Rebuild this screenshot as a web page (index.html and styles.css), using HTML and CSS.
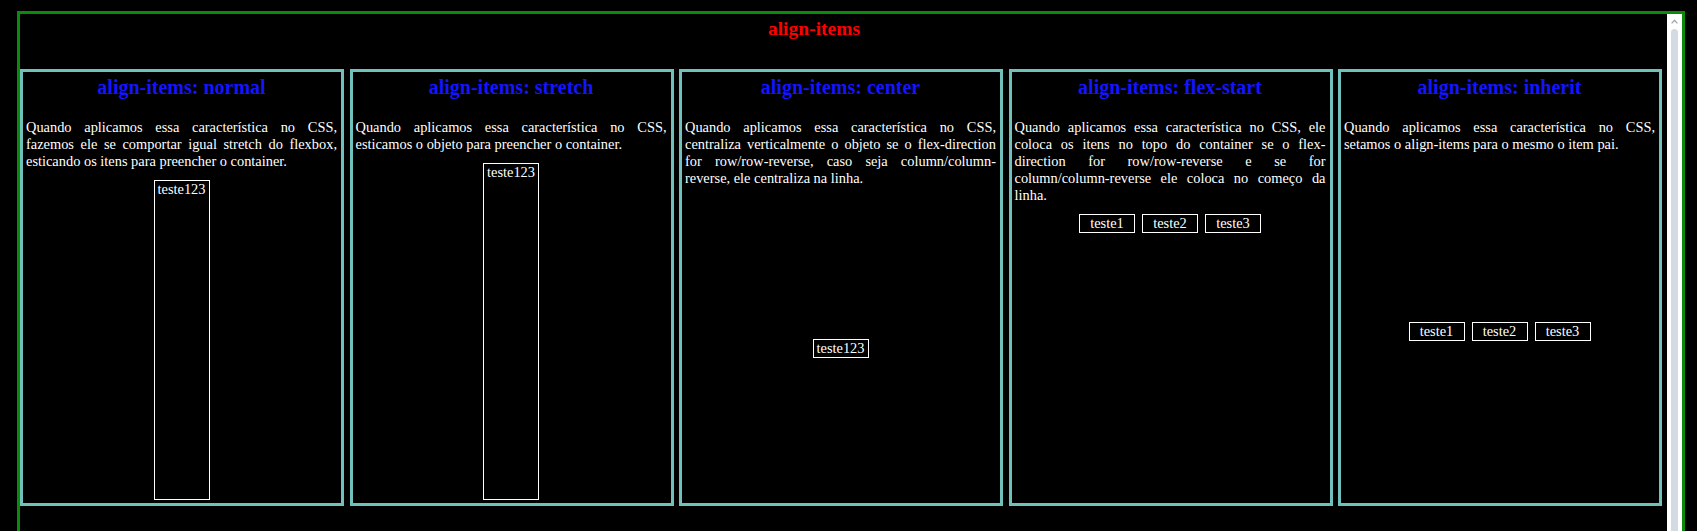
FILE: index.html
```html
<!DOCTYPE html>
<html lang="pt-BR">
<head>
<meta charset="utf-8">
<title>align-items</title>
<link rel="stylesheet" href="styles.css">
</head>
<body>
<div class="frame">
  <div class="content">
    <h1 class="page-title">align-items</h1>
    <div class="row">
      <section class="card">
        <h2 class="card-title">align-items: normal</h2>
        <p class="card-text">Quando aplicamos essa característica no CSS, fazemos ele se comportar igual stretch do flexbox, esticando os itens para preencher o container.</p>
        <div class="demo demo-stretch"><div class="item">teste123</div></div>
      </section>
      <section class="card">
        <h2 class="card-title">align-items: stretch</h2>
        <p class="card-text">Quando aplicamos essa característica no CSS, esticamos o objeto para preencher o container.</p>
        <div class="demo demo-stretch"><div class="item">teste123</div></div>
      </section>
      <section class="card">
        <h2 class="card-title">align-items: center</h2>
        <p class="card-text">Quando aplicamos essa característica no CSS, centraliza verticalmente o objeto se o flex-direction for row/row-reverse, caso seja column/column-reverse, ele centraliza na linha.</p>
        <div class="demo demo-center"><div class="item">teste123</div></div>
      </section>
      <section class="card">
        <h2 class="card-title">align-items: flex-start</h2>
        <p class="card-text">Quando aplicamos essa característica no CSS, ele coloca os itens no topo do container se o flex-direction for row/row-reverse e se for column/column-reverse ele coloca no começo da linha.</p>
        <div class="demo demo-start"><div class="item">teste1</div><div class="item">teste2</div><div class="item">teste3</div></div>
      </section>
      <section class="card">
        <h2 class="card-title">align-items: inherit</h2>
        <p class="card-text">Quando aplicamos essa característica no CSS, setamos o align-items para o mesmo o item pai.</p>
        <div class="demo demo-center"><div class="item">teste1</div><div class="item">teste2</div><div class="item">teste3</div></div>
      </section>
    </div>
  </div>
  <div class="scrollbar">
    <svg class="scroll-arrow" width="7" height="5" viewBox="0 0 7 5"><polyline points="0.6,4.4 3.5,1.2 6.4,4.4" fill="none" stroke="#a3aab3" stroke-width="1.4"/></svg>
    <div class="scroll-thumb"></div>
  </div>
</div>
</body>
</html>
```
FILE: styles.css
```css
html, body {
  margin: 0;
  padding: 0;
  background: #000;
  overflow: hidden;
}
body {
  font-family: "Liberation Serif", "Times New Roman", serif;
  color: #fff;
}
.frame {
  box-sizing: border-box;
  margin: 11px 12px 0 17px;
  height: 520px;
  border: 3px solid #0b8a0b;
  border-bottom: 0;
  display: flex;
}
.content {
  flex: 1;
  display: flex;
  flex-direction: column;
  min-width: 0;
}
.page-title {
  margin: 0;
  height: 55px;
  box-sizing: border-box;
  padding: 4px 59px 0 0;
  font-size: 19.5px;
  line-height: 22px;
  font-weight: bold;
  color: #ff0000;
  text-align: center;
}
.row {
  display: flex;
  gap: 5.5px;
  align-items: flex-start;
}
.card {
  flex: 0 0 324px;
  box-sizing: border-box;
  height: 437px;
  border: 3px solid #70c1bc;
  padding: 0 4px 3px 3px;
  display: flex;
  flex-direction: column;
}
.card-title {
  margin: 4px 0 0;
  font-size: 20px;
  line-height: 22px;
  font-weight: bold;
  color: #1414ff;
  text-align: center;
}
.card-text {
  margin: 21px 0 10px;
  font-size: 14.4px;
  line-height: 17px;
  text-align: justify;
}
.demo {
  flex: 1;
  display: flex;
  justify-content: center;
  gap: 7px;
}
.demo-stretch { align-items: stretch; }
.demo-center { align-items: center; }
.demo-start { align-items: flex-start; }
.item {
  box-sizing: border-box;
  width: 56px;
  border: 1px solid #fff;
  font-size: 14.4px;
  line-height: 17px;
  text-align: center;
}
.scrollbar {
  width: 15px;
  background: #fff;
  display: flex;
  flex-direction: column;
  align-items: center;
}
.scroll-arrow {
  display: block;
  margin-top: 5px;
}
.scroll-thumb {
  margin-top: 5px;
  width: 7px;
  flex: 1;
  background: #d2dae3;
  border-radius: 4px 4px 0 0;
}
```
